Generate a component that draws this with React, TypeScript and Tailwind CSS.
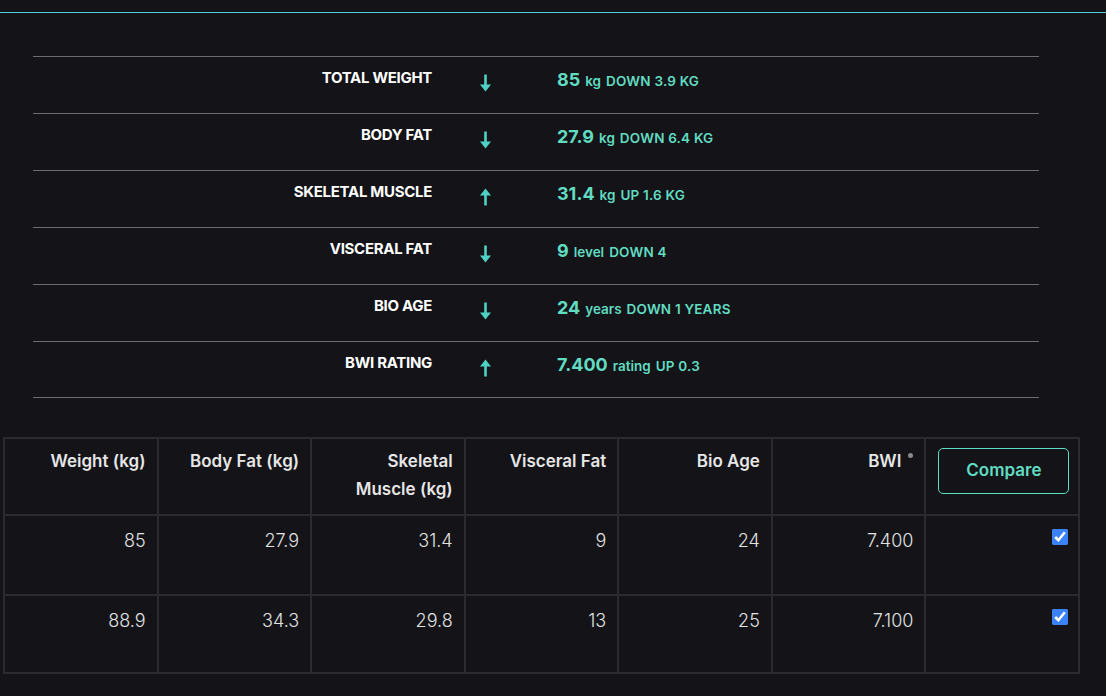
import React from "react";

type Dir = "up" | "down";

const summary: { label: string; dir: Dir; value: string; unit: string; change: string }[] = [
  { label: "TOTAL WEIGHT", dir: "down", value: "85", unit: "kg", change: "DOWN 3.9 KG" },
  { label: "BODY FAT", dir: "down", value: "27.9", unit: "kg", change: "DOWN 6.4 KG" },
  { label: "SKELETAL MUSCLE", dir: "up", value: "31.4", unit: "kg", change: "UP 1.6 KG" },
  { label: "VISCERAL FAT", dir: "down", value: "9", unit: "level", change: "DOWN 4" },
  { label: "BIO AGE", dir: "down", value: "24", unit: "years", change: "DOWN 1 YEARS" },
  { label: "BWI RATING", dir: "up", value: "7.400", unit: "rating", change: "UP 0.3" },
];

const rows = [
  ["85", "27.9", "31.4", "9", "24", "7.400"],
  ["88.9", "34.3", "29.8", "13", "25", "7.100"],
];

const Arrow = ({ dir }: { dir: Dir }) => (
  <svg width="13" height="18" viewBox="0 0 13 18" className="text-[#4fd0c4]">
    {dir === "down" ? (
      <g fill="currentColor">
        <rect x="5.2" y="0.5" width="2.6" height="11.5" />
        <polygon points="1,10.5 12,10.5 6.5,17.5" />
      </g>
    ) : (
      <g fill="currentColor">
        <rect x="5.2" y="6" width="2.6" height="11.5" />
        <polygon points="1,7.5 12,7.5 6.5,0.5" />
      </g>
    )}
  </svg>
);

const headCell = "h-[77px] border-r-2 border-b-2 border-[#2a2a2f] pl-3 pr-[11px] pt-[8px] text-right text-[17px] font-semibold leading-[28px] text-[#e6e6e6]";
const dataCell = "border-r-2 border-b-2 border-[#2a2a2f] pl-3 pr-[11px] pt-[11px] text-right text-[18px] font-light leading-[28px] text-[#e2e2e2]";

export default function App() {
  return (
    <div className="min-h-screen w-full overflow-hidden bg-[#131318] pt-3 font-['Inter',sans-serif]">
      <div className="h-px w-full bg-[#4fd3d9]" />

      {/* Summary */}
      <div className="ml-[33px] mt-[43px] w-[1006px]">
        {summary.map((s, i) => (
          <div
            key={s.label}
            className={`grid h-[57px] grid-cols-[415px_75px_1fr] border-t border-[#6b6b70] ${i === summary.length - 1 ? "border-b" : ""}`}
          >
            <div className="pr-4 pt-[11px] text-right text-[15px] font-bold leading-5 tracking-[-0.3px] text-white">{s.label}</div>
            <div className="flex justify-center pt-[17px]">
              <Arrow dir={s.dir} />
            </div>
            <div className="flex items-baseline gap-[5px] pl-[34px] pt-[11px] text-[#61dcc1]">
              <span className="text-[18px] font-bold leading-6">{s.value}</span>
              <span className="text-[13.5px] font-semibold">{s.unit}</span>
              <span className="text-[13.5px] font-semibold tracking-[0.2px]">{s.change}</span>
            </div>
          </div>
        ))}
      </div>

      {/* History table */}
      <div className="ml-[3px] mt-[39px] grid w-[1077px] grid-cols-7 border-l-2 border-t-2 border-[#2a2a2f]">
        <div className={headCell}>Weight (kg)</div>
        <div className={headCell}>Body Fat (kg)</div>
        <div className={headCell}>
          Skeletal
          <br />
          Muscle (kg)
        </div>
        <div className={headCell}>Visceral Fat</div>
        <div className={headCell}>Bio Age</div>
        <div className={headCell}>
          BWI
          <span className="ml-[7px] inline-block h-[5px] w-[5px] -translate-y-[7px] rounded-full bg-[#8a8a8e] align-middle" />
        </div>
        <div className="h-[77px] border-r-2 border-b-2 border-[#2a2a2f] pl-[12px] pt-[9px]">
          <button className="h-[46px] w-[131px] rounded-[5px] border border-[#5fdcc0] text-[17px] font-semibold text-[#61dcc1]">
            Compare
          </button>
        </div>

        {rows.map((r, i) => {
          const h = i === 0 ? "h-[80px]" : "h-[78px]";
          return (
            <React.Fragment key={i}>
              {r.map((v, j) => (
                <div key={j} className={`${dataCell} ${h}`}>
                  {v}
                </div>
              ))}
              <div className={`flex justify-end border-r-2 border-b-2 border-[#2a2a2f] pr-[10px] pt-[13px] ${h}`}>
                <input type="checkbox" defaultChecked className="h-4 w-4 accent-[#3b82f6]" />
              </div>
            </React.Fragment>
          );
        })}
      </div>
    </div>
  );
}
